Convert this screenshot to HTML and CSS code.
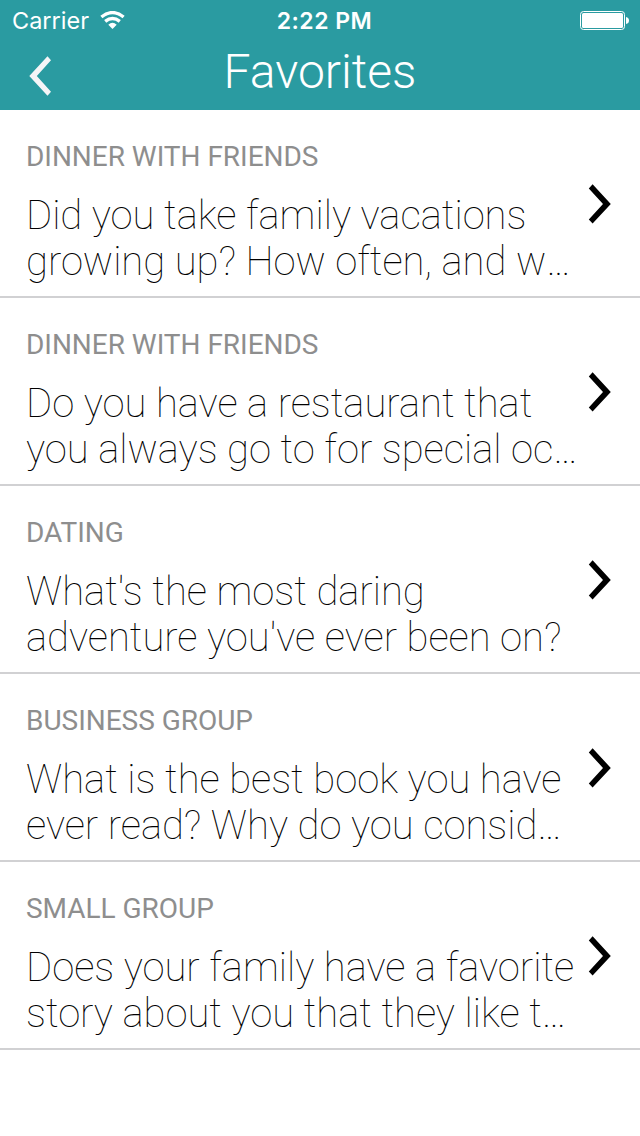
FILE: index.html
```html
<!DOCTYPE html>
<html lang="en">
<head>
<meta charset="utf-8">
<title>Favorites</title>
<link rel="stylesheet" href="styles.css">
</head>
<body>
<header class="header">
  <div class="status">
    <div class="carrier"><span class="carrier-name">Carrier</span>
      <svg class="wifi" width="25" height="18" viewBox="0 0 25 18"><g fill="none" stroke="#fff" stroke-width="3.4"><path d="M1.4 6Q12.5 -2.8 23.6 6"/><path d="M5.2 10.4Q12.5 4.6 19.8 10.4"/></g><path d="M8.3 13.7Q12.5 10 16.7 13.7L12.5 18z" fill="#fff"/></svg>
    </div>
    <div class="time">2:22 PM</div>
    <svg class="battery" width="49" height="19" viewBox="0 0 49 19"><rect x=".5" y=".5" width="44" height="18" rx="3" fill="none" stroke="#fff"/><rect x="2" y="2" width="41" height="15" rx="1.5" fill="#fff"/><path d="M46 6q3 .5 3 3.5t-3 3.5z" fill="#fff"/></svg>
  </div>
  <div class="nav">
    <svg class="back" width="24" height="40" viewBox="0 0 24 40"><path d="M19.5 .3L1.3 20L19.5 39.7L23 35.7L8.8 20L23 4.3z" fill="#f5f5f7"/></svg>
    <h1 class="title">Favorites</h1>
  </div>
</header>
<main class="list">
  <article class="item"><div class="copy"><h2 class="category">DINNER WITH FRIENDS</h2><p class="question"><span class="line">Did you take family vacations</span><span class="line">growing up? How often, and w<span class="more">…</span></span></p></div><svg class="chevron" width="24" height="40" viewBox="0 0 24 40"><path d="M4.6 .2L22.8 20L4.6 39.6L.8 35.6L15 20L.8 4.4z"/></svg></article>
  <article class="item"><div class="copy"><h2 class="category">DINNER WITH FRIENDS</h2><p class="question"><span class="line">Do you have a restaurant that</span><span class="line">you always go to for special oc…</span></p></div><svg class="chevron" width="24" height="40" viewBox="0 0 24 40"><path d="M4.6 .2L22.8 20L4.6 39.6L.8 35.6L15 20L.8 4.4z"/></svg></article>
  <article class="item"><div class="copy"><h2 class="category">DATING</h2><p class="question"><span class="line">What's the most daring</span><span class="line">adventure you've ever been on?</span></p></div><svg class="chevron" width="24" height="40" viewBox="0 0 24 40"><path d="M4.6 .2L22.8 20L4.6 39.6L.8 35.6L15 20L.8 4.4z"/></svg></article>
  <article class="item"><div class="copy"><h2 class="category">BUSINESS GROUP</h2><p class="question"><span class="line">What is the best book you have</span><span class="line">ever read? Why do you consid…</span></p></div><svg class="chevron" width="24" height="40" viewBox="0 0 24 40"><path d="M4.6 .2L22.8 20L4.6 39.6L.8 35.6L15 20L.8 4.4z"/></svg></article>
  <article class="item"><div class="copy"><h2 class="category">SMALL GROUP</h2><p class="question"><span class="line">Does your family have a favorite</span><span class="line">story about you that they like t…</span></p></div><svg class="chevron" width="24" height="40" viewBox="0 0 24 40"><path d="M4.6 .2L22.8 20L4.6 39.6L.8 35.6L15 20L.8 4.4z"/></svg></article>
</main>
</body>
</html>
```
FILE: styles.css
```css
* { box-sizing: border-box; }
body { margin: 0; width: 640px; height: 1136px; overflow: hidden; background: #fff; font-family: Roboto, sans-serif; }
.header { height: 110px; background: #2a9ba1; color: #fff; }
.status { height: 40px; padding: 1px 11px 0 12px; display: grid; grid-template-columns: 1fr auto 1fr; align-items: center; font-family: Inter, sans-serif; }
.carrier { display: flex; align-items: center; gap: 11px; font-size: 23.5px; }
.wifi { margin-top: -1px; }
.time { padding-left: 8px; font-size: 23px; font-weight: 600; letter-spacing: .5px; }
.battery { justify-self: end; }
.nav { height: 70px; padding: 0 28px; display: grid; grid-template-columns: 24px 1fr 24px; align-items: start; }
.back { margin-top: 16px; }
.title { margin: 4px 0 0; text-align: center; font-size: 48px; line-height: 56px; font-weight: 300; }
.item { height: 188px; padding: 30px 28px 0 26px; border-bottom: 2px solid #d1d1d3; display: flex; justify-content: space-between; }
.category { margin: 0; color: #8e8e8e; font-size: 28px; line-height: 34px; font-weight: 400; letter-spacing: -.03px; }
.question { margin: 19px 0 0; font-size: 40px; line-height: 46px; font-weight: 100; letter-spacing: -.02px; white-space: nowrap; }
.line { display: block; }
.more { display: inline-block; }
.copy { width: 550px; }
.chevron { flex: none; margin-top: 44px; }
```
